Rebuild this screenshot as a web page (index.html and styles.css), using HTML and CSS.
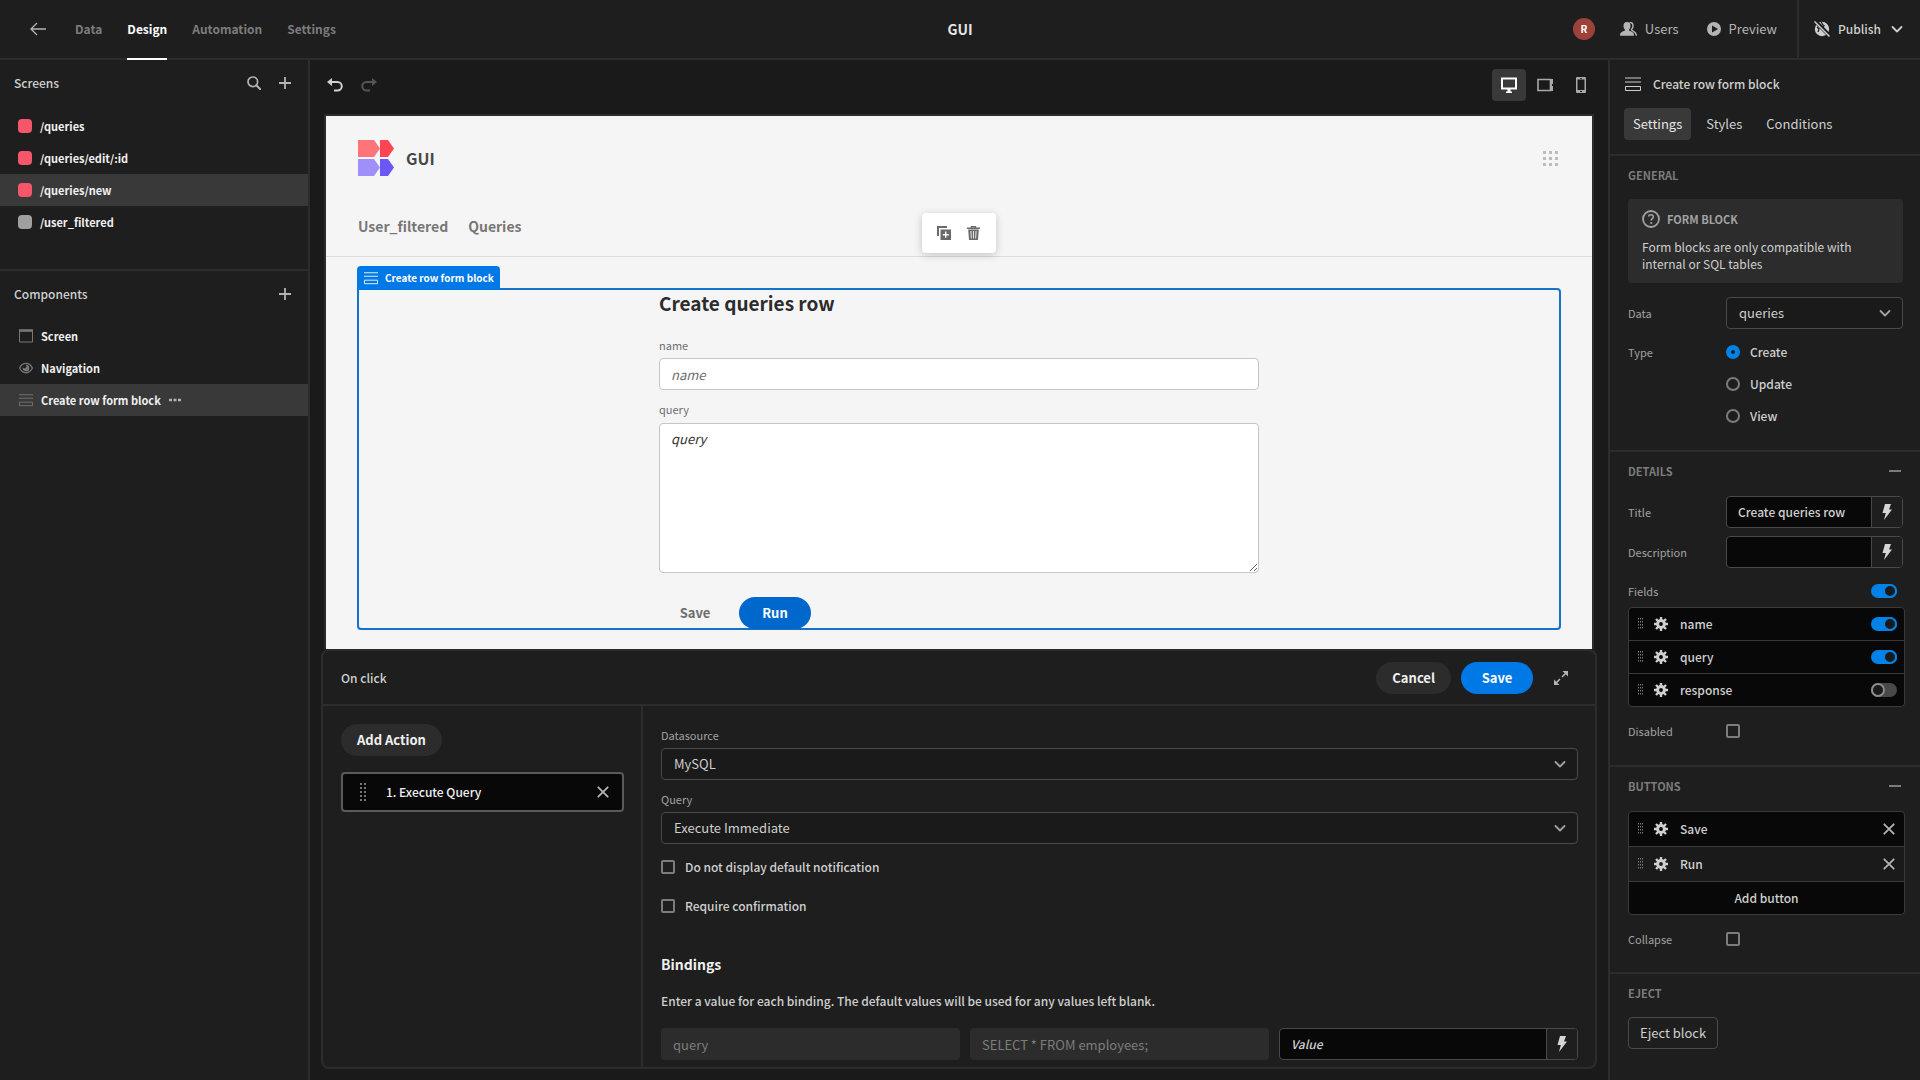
FILE: index.html
```html
<!DOCTYPE html>
<html lang="en">
<head>
<meta charset="utf-8">
<title>GUI</title>
<link rel="stylesheet" href="styles.css">
</head>
<body>
<svg class="sprite" aria-hidden="true">
  <symbol id="chevron" viewBox="0 0 12 12"><path d="M1.5 4 6 8.5 10.5 4" fill="none" stroke="currentColor" stroke-width="1.8" stroke-linecap="round" stroke-linejoin="round"/></symbol>
  <symbol id="plus" viewBox="0 0 12 12"><path d="M6 0v12M0 6h12" stroke="currentColor" stroke-width="1.8"/></symbol>
  <symbol id="minus" viewBox="0 0 12 12"><path d="M0 6h12" stroke="currentColor" stroke-width="2"/></symbol>
  <symbol id="cross" viewBox="0 0 12 12"><path d="m1.3 1.3 9.4 9.4m0-9.4-9.4 9.4" stroke="currentColor" stroke-width="1.8" stroke-linecap="round"/></symbol>
  <symbol id="bolt" viewBox="0 0 10 16"><path d="M3 0h6L7 5.5h3L2 16l1.800-7H.5z" fill="currentColor"/></symbol>
  <symbol id="gear" viewBox="0 0 14 14"><g stroke="currentColor" stroke-width="2.4"><path d="M7 0v3.500M7 10.500V14M0 7h3.500M10.500 7H14M2 2l2.500 2.500M9.500 9.500 12 12M12 2 9.500 4.500M4.500 9.500 2 12"/></g><circle cx="7" cy="7" r="3.400" fill="none" stroke="currentColor" stroke-width="3"/></symbol>
  <symbol id="drag" viewBox="0 0 6 12"><path d="M.5 0v12M2.500 0v12M4.500 0v12" stroke="currentColor" stroke-dasharray="1.500 1.500"/></symbol>
  <symbol id="drag-tall" viewBox="0 0 6 18"><path d="M1 0v18M5 0v18" stroke="currentColor" stroke-width="2" stroke-dasharray="2 2"/></symbol>
  <symbol id="form" viewBox="0 0 16 14"><path d="M0 1h16M0 5h16" stroke="currentColor"/><path d="M.5 9.500h15v4H.5z" fill="none" stroke="currentColor"/></symbol>
</svg>

<header class="topbar">
  <nav class="topbar-left">
    <a class="back" href="#" aria-label="Back"><svg width="16" height="14" viewBox="0 0 16 14"><path d="M7 1 1 7l6 6M1 7h15" fill="none" stroke="currentColor" stroke-width="1.300"/></svg></a>
    <a class="tab" href="#">Data</a>
    <a class="tab active" href="#">Design</a>
    <a class="tab" href="#">Automation</a>
    <a class="tab" href="#">Settings</a>
  </nav>
  <h1 class="app-name">GUI</h1>
  <div class="topbar-right">
    <span class="avatar">R</span>
    <button class="link-button" type="button"><svg width="17" height="14" viewBox="0 0 17 14"><path d="M7 0c2.300 0 3.500 1.600 3.500 4 0 1.500-.6 2.800-1.500 3.600v1c2.800.9 5 2 5 4.400v.7H0V13c0-2.400 2.200-3.500 5-4.400v-1C4.100 6.800 3.500 5.500 3.500 4 3.500 1.600 4.700 0 7 0z" fill="currentColor"/><path d="M9.500.5C12 .2 13 1.700 13 4c0 1.600-.8 2.600-1.500 3.500 0 2 4.500 1.500 5 6.200" fill="none" stroke="currentColor" stroke-width="1.400"/></svg>Users</button>
    <button class="link-button" type="button"><svg width="14" height="14" viewBox="0 0 14 14"><path fill-rule="evenodd" d="M7 0a7 7 0 1 1 0 14A7 7 0 0 1 7 0zM5 3.500v7L11 7z" fill="currentColor"/></svg>Preview</button>
    <button class="publish" type="button"><svg width="16" height="16" viewBox="0 0 16 16"><circle cx="8" cy="8" r="7.200" fill="currentColor"/><path d="M7 1c2 1 0 2.500 3 3.500L8.500 8M10 11l3 1M3 6l2 2-1 3" fill="none" stroke="#1e1e1e" stroke-width="1.300"/><path d="M1 0l15 15" stroke="#1e1e1e" stroke-width="4"/><path d="m.5.5 15 15" stroke="currentColor" stroke-width="1.500"/></svg>Publish<svg width="12" height="12"><use href="#chevron"/></svg></button>
  </div>
</header>

<div class="workspace">
  <aside class="sidebar">
    <section class="side-section screens">
      <div class="side-head"><h2>Screens</h2>
        <button class="icon-button" type="button" aria-label="Search"><svg width="14" height="14" viewBox="0 0 14 14"><circle cx="5.800" cy="5.800" r="4.800" fill="none" stroke="currentColor" stroke-width="1.700"/><path d="m9.300 9.300 4 4" stroke="currentColor" stroke-width="2" stroke-linecap="round"/></svg></button>
        <button class="icon-button" type="button" aria-label="Add screen"><svg width="12" height="12"><use href="#plus"/></svg></button>
      </div>
      <ul class="tree">
        <li><span class="swatch"></span>/queries</li>
        <li><span class="swatch"></span>/queries/edit/:id</li>
        <li class="selected"><span class="swatch"></span>/queries/new</li>
        <li><span class="swatch grey"></span>/user_filtered</li>
      </ul>
    </section>
    <section class="side-section">
      <div class="side-head"><h2>Components</h2>
        <button class="icon-button" type="button" aria-label="Add component"><svg width="12" height="12"><use href="#plus"/></svg></button>
      </div>
      <ul class="tree components">
        <li><svg width="14" height="14" viewBox="0 0 14 14"><path d="M.5 1v12h13V1" fill="none" stroke="currentColor"/><path d="M0 1.500h14" stroke="currentColor" stroke-width="2.600"/></svg>Screen</li>
        <li><svg width="14" height="12" viewBox="0 0 14 12"><path d="M.6 6C3.500-.3 10.500-.3 13.400 6 10.500 12.300 3.500 12.300.6 6z" fill="none" stroke="currentColor" stroke-width="1.300"/><path d="M7 2.700a3.300 3.300 0 1 1-3.200 2.800L6 6.500l1.500-1.800z" fill="currentColor"/></svg>Navigation</li>
        <li class="selected"><svg width="14" height="14"><use href="#form"/></svg>Create row form block<svg class="more" width="12" height="4" viewBox="0 0 12 4"><path d="M0 .8h3v2.400H0zM4.500.8h3v2.400h-3zM9 .8h3v2.400H9z" fill="currentColor"/></svg></li>
      </ul>
    </section>
  </aside>

  <main class="stage">
    <div class="stage-bar">
      <button class="icon-button undo" type="button" aria-label="Undo"><svg width="16" height="14" viewBox="0 0 16 14"><path d="M2 4h8.500a4 4 0 0 1 0 8.500H7" fill="none" stroke="currentColor" stroke-width="2"/><path d="M5 0v8L0 4z" fill="currentColor"/></svg></button>
      <button class="icon-button redo" type="button" aria-label="Redo"><svg width="16" height="14" viewBox="0 0 16 14"><path d="M14 4H5.500a4 4 0 0 0 0 8.500H9" fill="none" stroke="currentColor" stroke-width="2"/><path d="M11 0v8l5-4z" fill="currentColor"/></svg></button>
      <div class="devices">
        <button class="device active" type="button" aria-label="Desktop"><svg width="16" height="16" viewBox="0 0 16 16"><path d="M1 1.500h14v10H1z" fill="none" stroke="currentColor" stroke-width="2"/><path d="M6.500 12h3v2.500H11V16H5v-1.500h1.500z" fill="currentColor"/></svg></button>
        <button class="device" type="button" aria-label="Tablet"><svg width="16" height="14" viewBox="0 0 16 14"><path d="M1 1.500h12.500v11H1z" fill="none" stroke="currentColor" stroke-width="1.600"/><path d="M13 1h3v5h-1v2h1v5h-3z" fill="currentColor"/></svg></button>
        <button class="device" type="button" aria-label="Mobile"><svg width="10" height="16" viewBox="0 0 10 16"><path fill-rule="evenodd" d="M1 0h8q1 0 1 1v14q0 1-1 1H1q-1 0-1-1V1Q0 0 1 0zm.500 2.500v10.500h7V2.500zM4 1v.8h2V1zm0 13v1h2v-1z" fill="currentColor"/></svg></button>
      </div>
    </div>

    <div class="canvas">
      <div class="app-head">
        <svg width="36" height="36" viewBox="0 0 36 36"><path d="M0 0h16l6 8.500L16 17H0z" fill="#ff7479"/><path d="M22 0h8l6 8.500L30 17h-8z" fill="#ff4552"/><path d="M0 19h16l6 8.500L16 36H0z" fill="#9f8ff8"/><path d="M22 19h8l6 8.500L30 36h-8z" fill="#6b57f5"/></svg>
        <span class="app-title">GUI</span>
        <svg class="apps" width="15" height="15" viewBox="0 0 15 15"><path d="M1.500 0v15M7.500 0v15M13.500 0v15" stroke="currentColor" stroke-width="3" stroke-dasharray="3"/></svg>
      </div>
      <nav class="app-nav"><a href="#">User_filtered</a><a href="#">Queries</a></nav>
      <div class="float-tools">
        <button type="button" aria-label="Duplicate"><svg width="14" height="14" viewBox="0 0 14 14"><path d="M0 0h10v2H2v8H0z" fill="currentColor"/><path fill-rule="evenodd" d="M3.500 3.500H14V14H3.500zM8 5.500V8H5.800v1.400H8v2.400h1.400V9.400h2.400V8H9.400V5.500z" fill="currentColor"/></svg></button>
        <button type="button" aria-label="Delete"><svg width="13" height="14" viewBox="0 0 13 14"><path d="M4.500 1.500V.6h4v.9M0 2.200h13" fill="none" stroke="currentColor" stroke-width="1.400"/><path fill-rule="evenodd" d="M1.200 3.500h10.600L11 14H2zM3.500 5l.4 7.500h.8L4.400 5zm2.600 0v7.500h.8V5zm2.500 0-.3 7.500h.8L9.500 5z" fill="currentColor"/></svg></button>
      </div>
      <div class="block">
        <span class="block-tag"><svg width="14" height="14"><use href="#form"/></svg>Create row form block</span>
        <form class="row-form">
          <h2>Create queries row</h2>
          <label for="f-name">name</label>
          <input id="f-name" type="text" placeholder="name">
          <label for="f-query">query</label>
          <textarea id="f-query" placeholder="query"></textarea>
          <div class="form-actions"><button class="pill quiet" type="button">Save</button><button class="pill run" type="button">Run</button></div>
        </form>
      </div>
    </div>

    <section class="drawer">
      <header class="drawer-head">
        <h2>On click</h2>
        <button class="pill dark" type="button">Cancel</button>
        <button class="pill primary" type="button">Save</button>
        <button class="icon-button expand" type="button" aria-label="Expand"><svg width="14" height="14" viewBox="0 0 14 14"><path d="M8.500 0H14v5.500zM0 8.500V14h5.500z" fill="currentColor"/><path d="m8 6 4-4M6 8l-4 4" stroke="currentColor" stroke-width="1.600"/></svg></button>
      </header>
      <div class="drawer-body">
        <div class="actions">
          <button class="pill dark" type="button">Add Action</button>
          <div class="action"><svg width="6" height="18"><use href="#drag-tall"/></svg><span>1. Execute Query</span><button class="icon-button" type="button" aria-label="Remove"><svg width="12" height="12"><use href="#cross"/></svg></button></div>
        </div>
        <div class="action-form">
          <label for="ds">Datasource</label>
          <div class="picker"><select id="ds"><option>MySQL</option></select><svg width="12" height="12"><use href="#chevron"/></svg></div>
          <label for="qr">Query</label>
          <div class="picker"><select id="qr"><option>Execute Immediate</option></select><svg width="12" height="12"><use href="#chevron"/></svg></div>
          <label class="check"><input type="checkbox">Do not display default notification</label>
          <label class="check"><input type="checkbox">Require confirmation</label>
          <h3>Bindings</h3>
          <p>Enter a value for each binding. The default values will be used for any values left blank.</p>
          <div class="bindings">
            <input type="text" value="query" disabled aria-label="Binding name">
            <input type="text" value="SELECT * FROM employees;" disabled aria-label="Default value">
            <div class="bindable"><input type="text" placeholder="Value" aria-label="Value"><button type="button" aria-label="Bind"><svg width="10" height="16"><use href="#bolt"/></svg></button></div>
          </div>
        </div>
      </div>
    </section>
  </main>

  <aside class="inspector">
    <header class="inspector-head">
      <h2><svg width="16" height="14"><use href="#form"/></svg>Create row form block</h2>
      <nav><a class="active" href="#">Settings</a><a href="#">Styles</a><a href="#">Conditions</a></nav>
    </header>

    <section class="group general">
      <h3>GENERAL</h3>
      <div class="info">
        <h4><svg width="18" height="18" viewBox="0 0 18 18"><circle cx="9" cy="9" r="8" fill="none" stroke="currentColor" stroke-width="1.800"/><path d="M6.500 6.500C7 4 11.500 4.200 11.300 7 11.200 8.500 9.200 8.700 9.200 10.600" fill="none" stroke="currentColor" stroke-width="1.600"/><circle cx="9.200" cy="13" r="1.100" fill="currentColor"/></svg>FORM BLOCK</h4>
        <p>Form blocks are only compatible with internal or SQL tables</p>
      </div>
      <div class="prop"><label for="p-data">Data</label><div class="picker"><select id="p-data"><option>queries</option></select><svg width="12" height="12"><use href="#chevron"/></svg></div></div>
      <div class="prop radios"><span class="prop-name">Type</span>
        <div>
          <label><input type="radio" name="type" checked>Create</label>
          <label><input type="radio" name="type">Update</label>
          <label><input type="radio" name="type">View</label>
        </div>
      </div>
    </section>

    <section class="group details">
      <h3>DETAILS<svg width="12" height="12"><use href="#minus"/></svg></h3>
      <div class="prop"><label for="p-title">Title</label><div class="bindable"><input id="p-title" type="text" value="Create queries row"><button type="button" aria-label="Bind title"><svg width="10" height="16"><use href="#bolt"/></svg></button></div></div>
      <div class="prop"><label for="p-desc">Description</label><div class="bindable"><input id="p-desc" type="text"><button type="button" aria-label="Bind description"><svg width="10" height="16"><use href="#bolt"/></svg></button></div></div>
      <div class="fields-head"><label for="p-all">Fields</label><input id="p-all" class="switch" type="checkbox" checked></div>
      <ul class="list">
        <li><svg class="grip" width="6" height="12"><use href="#drag"/></svg><svg width="14" height="14"><use href="#gear"/></svg><label for="s1">name</label><input id="s1" class="switch" type="checkbox" checked></li>
        <li><svg class="grip" width="6" height="12"><use href="#drag"/></svg><svg width="14" height="14"><use href="#gear"/></svg><label for="s2">query</label><input id="s2" class="switch" type="checkbox" checked></li>
        <li><svg class="grip" width="6" height="12"><use href="#drag"/></svg><svg width="14" height="14"><use href="#gear"/></svg><label for="s3">response</label><input id="s3" class="switch" type="checkbox"></li>
      </ul>
      <div class="prop"><label for="p-dis">Disabled</label><input id="p-dis" type="checkbox"></div>
    </section>

    <section class="group buttons">
      <h3>BUTTONS<svg width="12" height="12"><use href="#minus"/></svg></h3>
      <ul class="list tall">
        <li><svg class="grip" width="6" height="12"><use href="#drag"/></svg><svg width="14" height="14"><use href="#gear"/></svg><span>Save</span><button class="icon-button" type="button" aria-label="Remove Save"><svg width="12" height="12"><use href="#cross"/></svg></button></li>
        <li class="hover"><svg class="grip" width="6" height="12"><use href="#drag"/></svg><svg width="14" height="14"><use href="#gear"/></svg><span>Run</span><button class="icon-button" type="button" aria-label="Remove Run"><svg width="12" height="12"><use href="#cross"/></svg></button></li>
        <li class="add"><button type="button">Add button</button></li>
      </ul>
      <div class="prop"><label for="p-col">Collapse</label><input id="p-col" type="checkbox"></div>
    </section>

    <section class="group eject">
      <h3>EJECT</h3>
      <button class="outline" type="button">Eject block</button>
    </section>
  </aside>
</div>
</body>
</html>
```
FILE: styles.css
```css
:root {
  --bg: #1a1a1a;
  --panel: #1e1e1e;
  --line: #2c2c2c;
  --raised: #2c2c2c;
  --selected: #393939;
  --field-line: #494949;
  --text: #cfcfcf;
  --muted: #a2a2a2;
  --faint: #7c7c7c;
  --blue: #0078e6;
}
*, *::before { box-sizing: border-box; }
html, body { height: 100%; }
body {
  margin: 0;
  display: flex;
  flex-direction: column;
  overflow: hidden;
  background: var(--bg);
  color: var(--text);
  font: 500 12px/18px "Noto Sans CJK SC", "Noto Sans", sans-serif;
}
h1, h2, h3, h4, p, ul { margin: 0; padding: 0; }
h1, h2, h3, h4 { font-size: inherit; font-weight: 500; }
ul { list-style: none; }
a { color: inherit; text-decoration: none; }
svg { display: block; flex: none; }
.sprite { position: absolute; width: 0; height: 0; }
button, input, select, textarea { font: inherit; color: inherit; margin: 0; }
button { padding: 0; border: 0; background: none; display: flex; align-items: center; justify-content: center; }

/* Top bar */
.topbar {
  flex: none;
  display: grid;
  grid-template-columns: 1fr auto 1fr;
  height: 60px;
  border-bottom: 2px solid var(--line);
  background: var(--panel);
}
.topbar-left { display: flex; align-items: stretch; gap: 25px; padding-left: 30px; font-weight: 700; color: var(--faint); }
.back, .tab { display: flex; align-items: center; }
.back { color: #b4b4b4; margin-right: 4px; }
.tab.active { color: #fff; margin-bottom: -2px; border-bottom: 2px solid #fff; }
.app-name { align-self: center; font-size: 14px; font-weight: 700; color: #e6e6e6; }
.topbar-right { display: flex; align-items: center; justify-content: flex-end; }
.avatar { width: 22px; height: 22px; margin-right: 25px; border-radius: 50%; background: #9c4238; color: #fff; font-size: 10px; font-weight: 700; line-height: 22px; text-align: center; }
.link-button { gap: 8px; margin-right: 28px; color: #b4b4b4; font-size: 13px; font-weight: 400; }
.publish { gap: 8px; }
.link-button:nth-of-type(2) { margin-right: 20px; }
.publish { align-self: stretch; padding: 0 17px 0 15px; border-left: 2px solid var(--line); }
.publish svg:last-child { margin-left: 2px; }

.workspace { flex: 1; min-height: 0; display: grid; grid-template-columns: 310px minmax(0, 1fr) 312px; }

/* Left sidebar */
.sidebar { background: var(--panel); border-right: 2px solid var(--line); }
.screens { padding-bottom: 31px; border-bottom: 2px solid var(--line); }
.side-head { display: flex; align-items: center; gap: 18px; height: 46px; padding: 0 17px 0 14px; }
.side-head h2 { flex: 1; }
.icon-button { color: #b4b4b4; }
.tree { padding-top: 4px; font-size: 11px; font-weight: 700; color: #f0f0f0; }
.tree li { display: flex; align-items: center; gap: 8px; height: 32px; padding-left: 18px; }
.tree.components { padding-top: 3px; }
.tree.components li { padding-left: 19px; }
.components svg { color: #777; }
.components .more { color: #b4b4b4; }
.tree .selected { background: var(--selected); }
.swatch { width: 14px; height: 14px; border-radius: 4px; background: #f5566c; }
.swatch.grey { background: #a0a0a0; }

/* Centre stage */
.stage { min-width: 0; display: flex; flex-direction: column; padding: 0 11px 11px; }
.stage-bar { flex: none; display: flex; align-items: center; gap: 18px; height: 54px; padding: 0 0 4px 6px; }
.undo { color: #d0d0d0; }
.redo { color: #555; }
.devices { display: flex; gap: 2px; margin-left: auto; margin-right: -1px; }
.device { width: 34px; height: 32px; border-radius: 4px; color: #a8a8a8; }
.device.active { background: #393939; color: #fff; }
.canvas { position: relative; flex: 1; min-height: 0; margin: 0 3px; overflow: hidden; border: 2px solid var(--line); border-bottom: 0; background: #f5f5f5; color: #6e6e6e; }
.app-head { display: flex; align-items: center; gap: 12px; padding: 24px 34px 0 32px; }
.app-title { font-size: 16px; line-height: 24px; font-weight: 700; color: #464646; }
.apps { margin-left: auto; color: #bdbdbd; }
.app-nav { display: flex; gap: 20px; margin-top: 24px; padding: 14px 32px 18px; border-bottom: 1px solid #dcdcdc; font-size: 14px; line-height: 24px; font-weight: 700; color: #777; }
.float-tools { position: absolute; top: 97px; left: 50%; width: 74px; height: 40px; margin-left: -37px; display: flex; align-items: center; justify-content: center; gap: 16px; padding-right: 2px; border-radius: 4px; background: #fff; box-shadow: 0 2px 8px rgba(0, 0, 0, .2); color: #6a6a6a; }
.block { position: relative; margin: 31px 31px 0; border: 2px solid #1473c8; border-radius: 0 4px 4px 4px; }
.block-tag { position: absolute; left: -2px; bottom: 100%; height: 24px; display: flex; align-items: center; gap: 7px; padding: 0 6px 0 7px; border-radius: 4px 4px 0 0; background: var(--blue); color: #fff; font-size: 10px; font-weight: 700; white-space: nowrap; }
.row-form { display: flex; flex-direction: column; max-width: 600px; margin: 0 auto; }
.row-form h2 { font-size: 19px; line-height: 26px; font-weight: 700; color: #2c2c2c; }
.row-form label { margin-top: 10px; margin-bottom: 1px; font-size: 11px; line-height: 18px; font-weight: 400; }
.row-form h2 + label { margin-top: 20px; }
.row-form input, .row-form textarea { margin-top: 3px; padding: 0 11px; border: 1px solid #c6c6c6; border-radius: 4px; background: #fff; outline: 0; font-size: 13px; font-weight: 400; }
.row-form input { height: 32px; }
.row-form textarea { height: 150px; margin-top: 4px; padding-top: 6px; }
::placeholder { color: inherit; opacity: 1; font-style: italic; }
.row-form textarea::placeholder { color: #333; }
.form-actions { display: flex; gap: 8px; margin-top: 24px; margin-bottom: -1px; }
.pill { height: 32px; min-width: 72px; padding: 0 16px; border-radius: 16px; font-size: 13px; font-weight: 700; }
.quiet { color: #6e6e6e; }
.run { background: #0068cc; color: #fff; }
.dark { background: var(--raised); color: #f0f0f0; }
.primary { background: var(--blue); color: #fff; }

/* Action drawer */
.drawer { flex: none; position: relative; display: flex; flex-direction: column; height: 420px; border: 2px solid var(--line); border-radius: 8px; background: var(--panel); }
.drawer-head { display: flex; align-items: center; gap: 10px; height: 55px; padding: 0 27px 0 18px; border-bottom: 2px solid var(--line); }
.drawer-head h2 { flex: 1; }
.expand { margin-left: 11px; }
.drawer-body { flex: 1; min-height: 0; display: grid; grid-template-columns: 320px minmax(0, 1fr); }
.actions { display: flex; flex-direction: column; align-items: flex-start; gap: 16px; padding: 18px 17px 0 18px; border-right: 2px solid var(--line); }
.action { align-self: stretch; display: flex; align-items: center; height: 40px; padding: 0 13px 0 17px; border: 2px solid #5a5a5a; border-radius: 4px; background: #080808; color: #f0f0f0; }
.action span { flex: 1; padding-left: 20px; }
.action > svg { color: #777; }
.action-form { display: flex; flex-direction: column; padding: 20px 17px 0 18px; }
.action-form > label:not(.check) { font-size: 11px; line-height: 18px; font-weight: 400; color: var(--muted); margin-bottom: 4px; }
.action-form .picker + label:not(.check) { margin-top: 10px; margin-bottom: 4px; }
.picker { position: relative; }
.picker select { display: block; width: 100%; height: 32px; padding: 0 12px; border: 1px solid var(--field-line); border-radius: 4px; appearance: none; background: var(--bg); font-size: 13px; font-weight: 400; }
.picker svg { position: absolute; right: 12px; top: 10px; color: #a2a2a2; pointer-events: none; }
.check { display: flex; align-items: center; gap: 10px; margin-top: 14px; }
.check + .check { margin-top: 21px; }
input[type="checkbox"]:not(.switch) { appearance: none; width: 14px; height: 14px; border: 2px solid #7c7c7c; border-radius: 2px; }
.action-form h3 { margin-top: 37px; font-size: 14px; line-height: 24px; font-weight: 700; color: #f0f0f0; }
.action-form p { margin-top: 16px; }
.bindings { display: grid; grid-template-columns: repeat(3, minmax(0, 1fr)); gap: 10px; margin-top: 18px; }
.bindings > input { height: 32px; padding: 0 12px; border: 0; border-radius: 4px; background: var(--raised); color: var(--faint); font-size: 13px; font-weight: 400; }
.bindable { display: flex; height: 32px; border: 1px solid var(--field-line); border-radius: 4px; overflow: hidden; background: #080808; }
.bindable input { flex: 1; min-width: 0; padding: 0 11px; border: 0; background: none; outline: 0; }
.bindable button { width: 31px; border-left: 1px solid var(--field-line); background: var(--panel); color: #d6d6d6; }

/* Inspector */
.inspector { background: var(--panel); border-left: 2px solid var(--line); }
.inspector-head { padding: 15px 14px 14px; border-bottom: 2px solid var(--line); }
.inspector-head h2 { display: flex; align-items: center; gap: 12px; height: 18px; padding-left: 1px; }
.inspector-head nav { display: flex; gap: 6px; margin-top: 15px; font-size: 13px; font-weight: 400; }
.inspector-head nav a { padding: 7px 9px; border-radius: 4px; }
.inspector-head nav .active { background: var(--selected); color: #e6e6e6; }
.group { padding: 10px 15px 0 18px; border-bottom: 2px solid var(--line); }
.group h3 { display: flex; align-items: center; justify-content: space-between; height: 18px; padding-right: 4px; font-size: 11px; font-weight: 700; color: var(--faint); }
.info { margin: 15px 2px 14px 0; padding: 11px 14px; border-radius: 4px; background: var(--raised); }
.info h4 { display: flex; align-items: center; gap: 7px; font-size: 11px; font-weight: 700; color: var(--muted); }
.info p { margin-top: 10px; line-height: 17px; font-weight: 400; }
.general { padding-bottom: 17px; }
.prop { display: grid; grid-template-columns: 98px minmax(0, 1fr); align-items: center; padding-right: 2px; }
.prop > label, .prop-name, .fields-head label { font-size: 11px; font-weight: 400; color: var(--muted); }
.radios { margin-top: 7px; margin-bottom: 1px; align-items: start; }
.radios .prop-name { line-height: 32px; }
.radios label { display: flex; align-items: center; gap: 10px; height: 32px; }
input[type="radio"] { appearance: none; width: 14px; height: 14px; border: 2px solid #7c7c7c; border-radius: 50%; }
input[type="radio"]:checked { border: 5px solid #0082e6; }
.details { padding-bottom: 25px; }
.details h3 + .prop { margin-top: 16px; }
.details .prop + .prop { margin-top: 8px; }
.fields-head { display: flex; align-items: center; justify-content: space-between; height: 32px; margin-top: 7px; padding-right: 8px; }
.switch { position: relative; appearance: none; width: 26px; height: 14px; border-radius: 7px; background: #494949; }
.switch::before { content: ""; position: absolute; left: 0; top: 0; width: 14px; height: 14px; border: 2px solid #8c8c8c; border-radius: 50%; background: #1a1a1a; }
.switch:checked { background: #0082e6; }
.switch:checked::before { left: 12px; border-color: #0082e6; }
.list { border: 1px solid #3a3a3a; border-radius: 4px; background: #080808; overflow: hidden; }
.list li { display: flex; align-items: center; height: 33px; padding: 0 7px 0 9px; }
.list li:first-child { height: 32px; }
.list li + li { border-top: 1px solid #3a3a3a; }
.list li > label, .list li > span { flex: 1; padding-left: 12px; }
.list .grip { margin-right: 10px; color: #777; }
.details .list { margin-bottom: 15px; }
.buttons .list { margin: 16px 0 15px; }
.list.tall li { height: 35px; padding-right: 9px; }
.list.tall li:first-child { height: 34px; }
.list .hover { background: var(--bg); }
.list.tall .add { height: 33px; padding: 0; }
.add button { flex: 1; height: 100%; }
.buttons { padding-bottom: 24px; }
.eject { border-bottom: 0; }
.outline { margin-top: 15px; height: 32px; padding: 0 11px; border: 1px solid var(--field-line); border-radius: 4px; font-size: 13px; font-weight: 400; }
```
